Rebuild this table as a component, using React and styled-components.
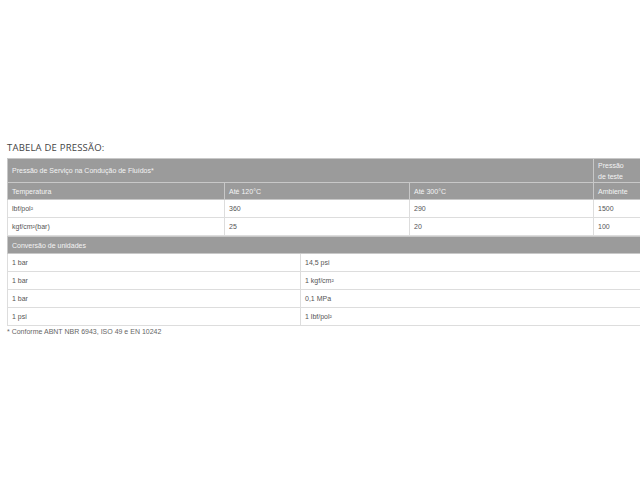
import React from "react";
import styled, { createGlobalStyle } from "styled-components";

const GlobalStyle = createGlobalStyle`
  html, body {
    margin: 0;
    padding: 0;
    background: #fff;
    overflow: hidden;
  }
`;

const pressureRows = [
  ["lbf/pol²", "360", "290", "1500"],
  ["kgf/cm²(bar)", "25", "20", "100"],
];

const conversions = [
  ["1 bar", "14,5 psi"],
  ["1 bar", "1 kgf/cm²"],
  ["1 bar", "0,1 MPa"],
  ["1 psi", "1 lbf/pol²"],
];

function App() {
  return (
    <Page>
      <GlobalStyle />
      <Title>TABELA DE PRESSÃO:</Title>
      <Table>
        <colgroup>
          <col style={{ width: 217 }} />
          <col style={{ width: 185 }} />
          <col style={{ width: 184 }} />
          <col />
        </colgroup>
        <tbody>
          <HeadRow $tall>
            <HeadCell colSpan={3}>Pressão de Serviço na Condução de Fluídos*</HeadCell>
            <HeadCell>
              Pressão
              <br />
              de teste
            </HeadCell>
          </HeadRow>
          <HeadRow>
            <HeadCell>Temperatura</HeadCell>
            <HeadCell>Até 120°C</HeadCell>
            <HeadCell>Até 300°C</HeadCell>
            <HeadCell>Ambiente</HeadCell>
          </HeadRow>
          {pressureRows.map((row) => (
            <tr key={row[0]}>
              {row.map((v, i) => (
                <Cell key={i}>{v}</Cell>
              ))}
            </tr>
          ))}
        </tbody>
      </Table>
      <Table>
        <colgroup>
          <col style={{ width: 293 }} />
          <col />
        </colgroup>
        <tbody>
          <HeadRow>
            <HeadCell colSpan={2}>Conversão de unidades</HeadCell>
          </HeadRow>
          {conversions.map((row, idx) => (
            <tr key={idx}>
              <Cell>{row[0]}</Cell>
              <Cell>{row[1]}</Cell>
            </tr>
          ))}
        </tbody>
      </Table>
      <Note>* Conforme ABNT NBR 6943, ISO 49 e EN 10242</Note>
    </Page>
  );
}

const Page = styled.div`
  padding: 142px 0 0 7px;
  width: 660px;
  font-family: "Liberation Sans", Arial, sans-serif;
`;

const Title = styled.h3`
  margin: 0 0 5px 0;
  font-family: "Open Sans", "Liberation Sans", sans-serif;
  font-size: 9.5px;
  font-weight: 400;
  letter-spacing: 0.2px;
  line-height: 11px;
  color: #444;
`;

const Table = styled.table`
  width: 650px;
  border-collapse: collapse;
  table-layout: fixed;
  border-left: 1px solid #ddd;
`;

const HeadRow = styled.tr`
  height: ${(p) => (p.$tall ? "24px" : "17px")};
  background: #9b9b9b;
`;

const HeadCell = styled.td`
  padding: 0 4px;
  border: 1px solid #c8c8c8;
  color: #f4f4f4;
  font-size: 7px;
  line-height: 11px;
  vertical-align: middle;
  text-align: left;
`;

const Cell = styled.td`
  height: 17px;
  padding: 0 4px;
  border: 1px solid #ddd;
  color: #555;
  font-size: 7px;
  line-height: 11px;
  vertical-align: middle;
  background: #fff;
`;

const Note = styled.p`
  margin: 1px 0 0 0;
  font-size: 7px;
  line-height: 10px;
  color: #666;
`;

export default App;
